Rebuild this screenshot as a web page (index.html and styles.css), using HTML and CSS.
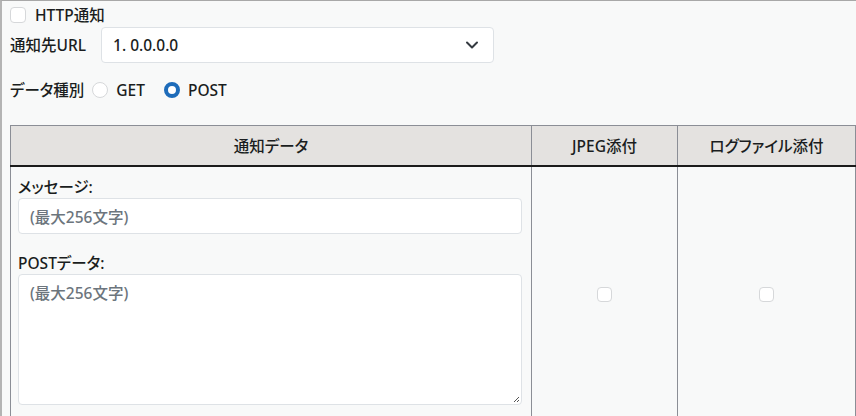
FILE: index.html
```html
<!DOCTYPE html>
<html lang="ja">
<head>
<meta charset="utf-8">
<link rel="stylesheet" href="styles.css">
</head>
<body>
<div class="panel">
  <label class="row row-check">
    <span class="cbox"></span>
    <span class="check-label">HTTP通知</span>
  </label>
  <div class="row row-url">
    <span class="field-label">通知先URL</span>
    <div class="select">
      <span>1. 0.0.0.0</span>
      <svg class="chev" width="14" height="10" viewBox="0 0 14 10"><path d="M2 2.5 L7 7.5 L12 2.5" fill="none" stroke="#343a40" stroke-width="2" stroke-linecap="round" stroke-linejoin="round"/></svg>
    </div>
  </div>
  <div class="row row-radio">
    <span class="field-label">データ種別</span>
    <span class="radio"></span><span class="radio-label">GET</span>
    <span class="radio on"></span><span class="radio-label">POST</span>
  </div>
  <table class="grid">
    <thead>
      <tr>
        <th class="c1">通知データ</th>
        <th class="c2">JPEG添付</th>
        <th class="c3">ログファイル添付</th>
      </tr>
    </thead>
    <tbody>
      <tr>
        <td class="c1 data">
          <div class="lbl">メッセージ:</div>
          <div class="input"><span class="ph">(最大256文字)</span></div>
          <div class="lbl lbl2">POSTデータ:</div>
          <div class="textarea"><span class="ph">(最大256文字)</span>
            <svg class="grip" width="8" height="8" viewBox="0 0 8 8"><path d="M7 2 L2 7 M7 5 L5 7" stroke="#555" stroke-width="1"/></svg>
          </div>
        </td>
        <td class="c2 mid"><span class="cbox small"></span></td>
        <td class="c3 mid"><span class="cbox small"></span></td>
      </tr>
    </tbody>
  </table>
</div>
</body>
</html>
```

FILE: styles.css
```css
html, body {
  margin: 0;
  padding: 0;
  background: #f8f9f9;
}
body {
  font-family: "Noto Sans", "Noto Sans CJK JP", sans-serif;
  font-size: 15.5px;
  font-weight: 500;
  font-feature-settings: "palt";
  color: #1a1d20;
  width: 856px;
  height: 416px;
  overflow: hidden;
}
.panel {
  box-sizing: border-box;
  height: 416px;
  border-left: 2px solid #b4b4b4;
  border-top: 1px solid #a8a8a8;
  padding: 3px 0 0 8px;
}
.row {
  display: flex;
  align-items: center;
}
.row-check {
  height: 22px;
}
.cbox {
  display: inline-block;
  box-sizing: border-box;
  width: 16px;
  height: 16px;
  border: 1px solid #d6d8da;
  border-radius: 4px;
  background: #fff;
}
.check-label {
  margin-left: 9px;
  line-height: 22px;
}
.row-url {
  margin-top: 1px;
  height: 36px;
}
.field-label {
  line-height: 22px;
}
.select {
  box-sizing: border-box;
  margin-left: 15px;
  width: 393px;
  height: 36px;
  background: #fff;
  border: 1px solid #dee2e6;
  border-radius: 4px;
  display: flex;
  align-items: center;
  justify-content: space-between;
  padding: 0 14px 0 11px;
}
.chev {
  display: block;
}
.row-radio {
  margin-top: 16px;
  height: 22px;
}
.radio {
  display: inline-block;
  box-sizing: border-box;
  width: 16px;
  height: 16px;
  border-radius: 50%;
  border: 1px solid #d6d8da;
  background: #fff;
  margin-left: 8px;
}
.radio.on {
  border: 4.5px solid #1e6cba;
  background: #fff;
  margin-left: 19px;
}
.radio-label {
  margin-left: 8px;
}
.grid {
  margin-top: 24px;
  border-collapse: collapse;
  width: 846px;
  table-layout: fixed;
}
.grid th, .grid td {
  border: 1px solid #8b8e96;
  padding: 0;
}
.grid th {
  background: #e4e2e0;
  height: 39px;
  font-weight: 500;
  text-align: center;
  border-bottom: 2px solid #1b1b1b;
}
.grid .c1 { width: 520px; }
.grid .c2 { width: 145px; }
.grid .c3 { width: 177px; }
.grid th.c3, .grid td.c3 { border-left-color: #c4c5ca; }
.grid td {
  height: 244px;
  vertical-align: top;
}
.data {
  padding: 8px 9px 6px 7px !important;
  box-sizing: border-box;
}
.lbl {
  line-height: 22px;
  height: 22px;
  margin-top: 1px;
}
.lbl2 {
  margin-top: 18px;
}
.input, .textarea {
  box-sizing: border-box;
  background: #fff;
  border: 1px solid #dee2e6;
  border-radius: 4px;
  padding: 0 11px;
  color: #6c757d;
}
.input {
  height: 36px;
  display: flex;
  align-items: center;
}
.textarea {
  position: relative;
  height: 131px;
  padding-top: 7px;
  line-height: 22px;
}
.grip {
  position: absolute;
  right: 1px;
  bottom: 1px;
}
.ph {
  color: #6c757d;
}
.grid td.mid {
  vertical-align: middle;
  padding-top: 5px;
}
.cbox.small {
  display: block;
  width: 15px;
  height: 15px;
  margin: 0 auto;
}
```
